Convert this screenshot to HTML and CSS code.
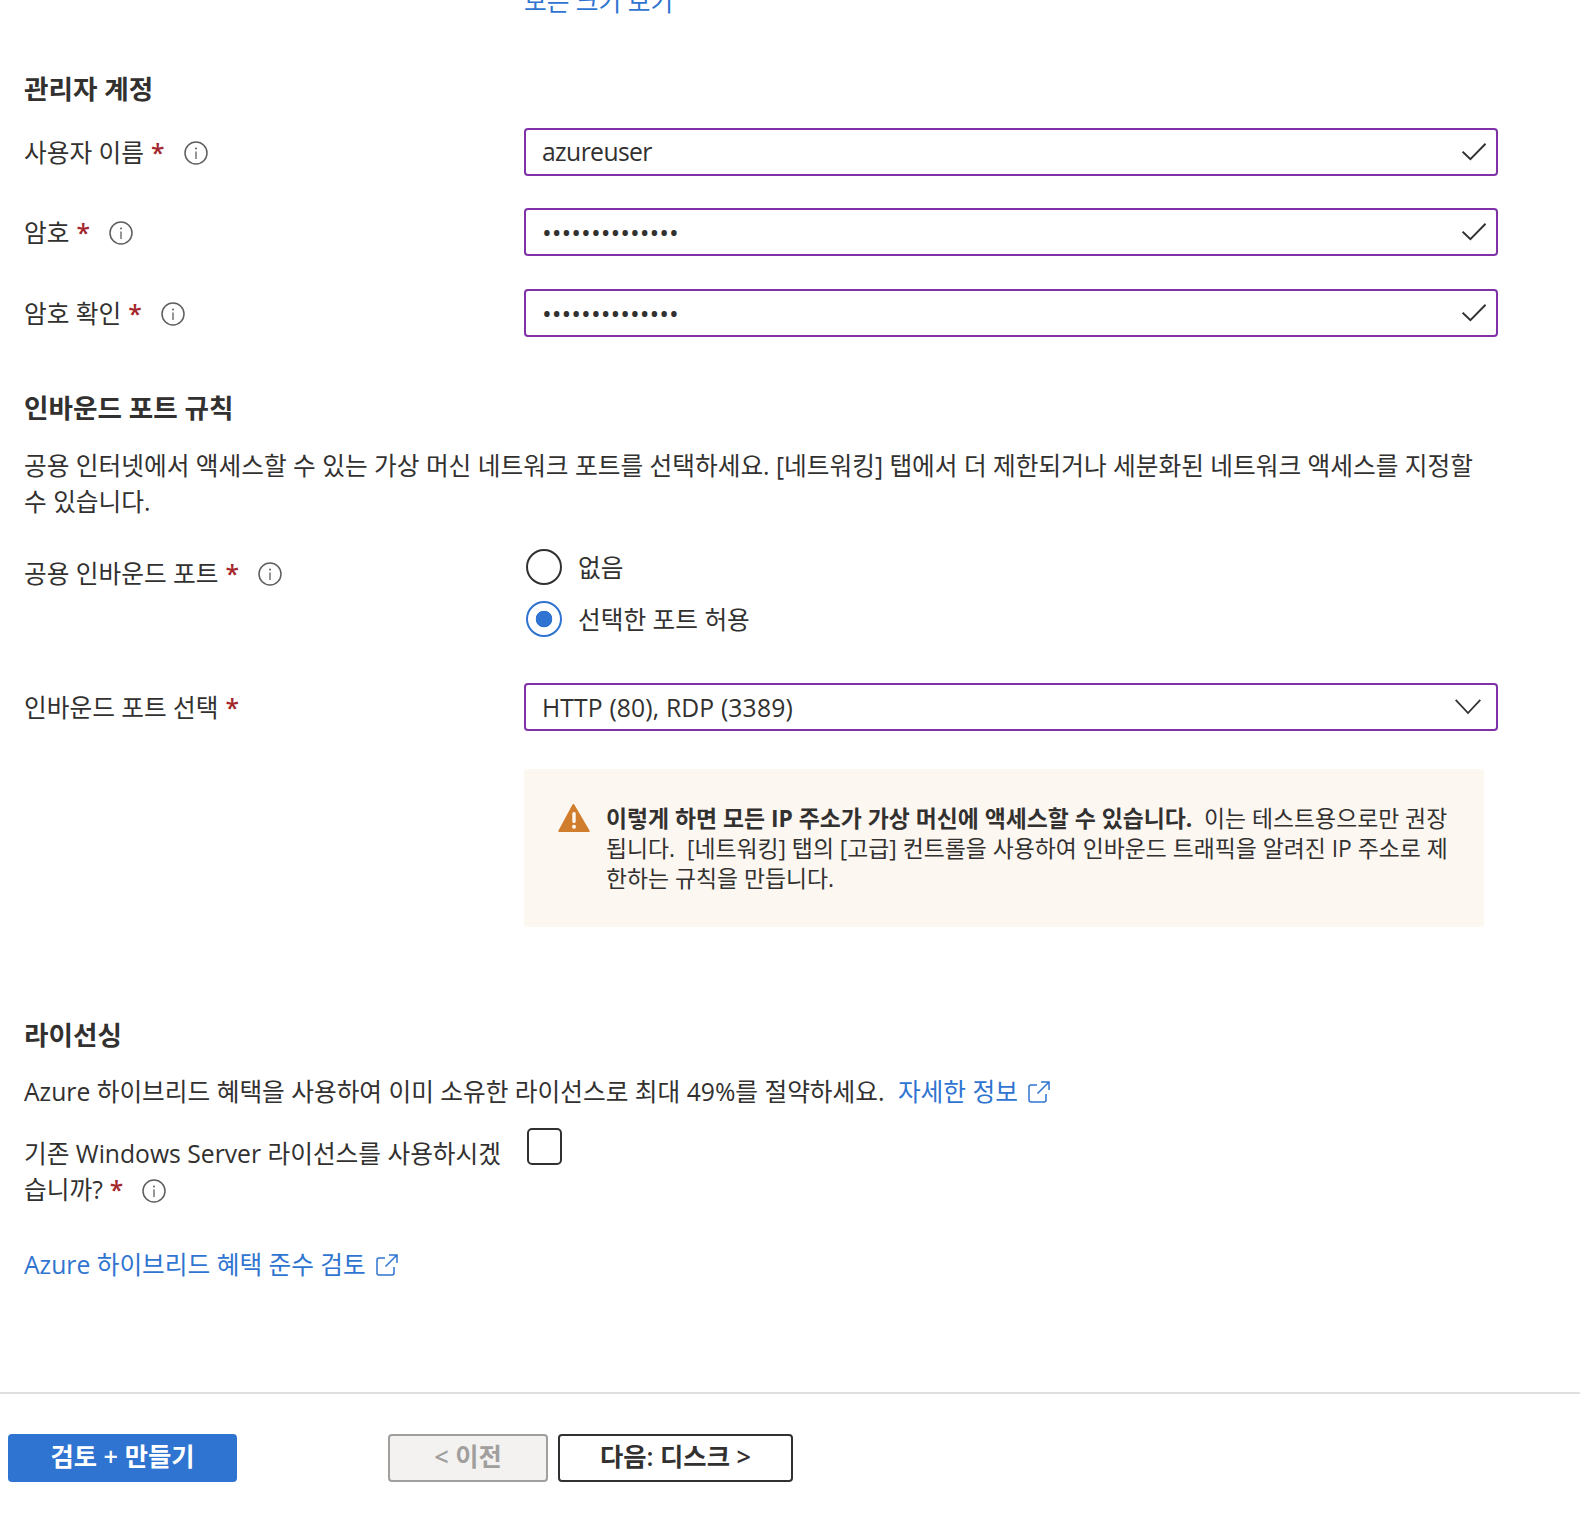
FILE: index.html
```html
<!DOCTYPE html>
<html lang="ko">
<head>
<meta charset="utf-8">
<title>가상 머신 만들기</title>
<link rel="stylesheet" href="styles.css">
</head>
<body>
<svg class="defs" width="0" height="0" aria-hidden="true">
  <symbol id="info" viewBox="0 0 24 24"><circle cx="12" cy="12" r="11" fill="none" stroke="#605e5c" stroke-width="1.5"/><path d="M12 10.5v7.5" stroke="#605e5c" stroke-width="1.3" fill="none"/><circle cx="12" cy="7.4" r="1" fill="#605e5c"/></symbol>
  <symbol id="check" viewBox="0 0 24 18"><path d="M.6 8.6 8.4 16.2 23.6.8" fill="none" stroke="#323130" stroke-width="2"/></symbol>
  <symbol id="ext" viewBox="0 0 22 22"><path d="M9 4H3a2 2 0 0 0-2 2v13a2 2 0 0 0 2 2h13a2 2 0 0 0 2-2v-6M9.500 12.500 20.500 1.500M13 1h8v8" fill="none" stroke="#2f74d0" stroke-width="1.500"/></symbol>
</svg>
<main class="page">
  <a class="top-link link" href="#">모든 크기 보기</a>

  <h2 class="heading heading-admin">관리자 계정</h2>
  <div class="row">
    <div class="label">사용자 이름<span class="req">*</span><svg class="info"><use href="#info"/></svg></div>
    <div class="field"><span class="value-narrow">azureuser</span><svg class="check"><use href="#check"/></svg></div>
  </div>
  <div class="row row-password">
    <div class="label">암호<span class="req">*</span><svg class="info"><use href="#info"/></svg></div>
    <div class="field"><span class="dots">••••••••••••••</span><svg class="check"><use href="#check"/></svg></div>
  </div>
  <div class="row">
    <div class="label">암호 확인<span class="req">*</span><svg class="info"><use href="#info"/></svg></div>
    <div class="field"><span class="dots">••••••••••••••</span><svg class="check"><use href="#check"/></svg></div>
  </div>

  <h2 class="heading heading-inbound">인바운드 포트 규칙</h2>
  <p class="para">공용 인터넷에서 액세스할 수 있는 가상 머신 네트워크 포트를 선택하세요. [네트워킹] 탭에서 더 제한되거나 세분화된 네트워크 액세스를 지정할 수 있습니다.</p>

  <div class="row row-radio">
    <div class="label">공용 인바운드 포트<span class="req">*</span><svg class="info"><use href="#info"/></svg></div>
    <div class="radios">
      <div class="radio-item"><span class="radio"></span><span class="radio-text">없음</span></div>
      <div class="radio-item"><span class="radio radio-on"></span><span class="radio-text">선택한 포트 허용</span></div>
    </div>
  </div>

  <div class="row row-select">
    <div class="label">인바운드 포트 선택<span class="req">*</span></div>
    <div class="field"><span class="value-wide">HTTP (80), RDP (3389)</span>
      <svg class="chevron" viewBox="0 0 26 16"><path d="M.7.8 13 14 25.300.8" fill="none" stroke="#323130" stroke-width="1.800"/></svg>
    </div>
  </div>

  <div class="callout">
    <svg class="warn" viewBox="0 0 32 29"><path d="M16 1 31.500 27.500a1 1 0 0 1-.8 1.500H1.300a1 1 0 0 1-.8-1.500L14.500 1.500a1.700 1.700 0 0 1 1.500-.5z" fill="#d17d2e"/><rect x="14.300" y="9" width="3.400" height="11" rx="1.500" fill="#fdf7f1"/><circle cx="16" cy="23.800" r="2" fill="#fdf7f1"/></svg>
    <p class="callout-text"><strong>이렇게 하면 모든 IP 주소가 가상 머신에 액세스할 수 있습니다.</strong>&nbsp; 이는 테스트용으로만 권장됩니다.&nbsp; [네트워킹] 탭의 [고급] 컨트롤을 사용하여 인바운드 트래픽을 알려진 IP 주소로 제한하는 규칙을 만듭니다.</p>
  </div>

  <h2 class="heading heading-license">라이선싱</h2>
  <p class="para">Azure 하이브리드 혜택을 사용하여 이미 소유한 라이선스로 최대 49%를 절약하세요. <a class="link link-inline" href="#">자세한 정보<svg class="ext"><use href="#ext"/></svg></a></p>

  <div class="row row-check">
    <div class="label label-wrap">기존 Windows Server 라이선스를 사용하시겠습니까?<span class="req">*</span><svg class="info"><use href="#info"/></svg></div>
    <div><span class="checkbox"></span></div>
  </div>

  <p class="para"><a class="link" href="#">Azure 하이브리드 혜택 준수 검토<svg class="ext"><use href="#ext"/></svg></a></p>
</main>
<footer class="footer">
  <button class="btn btn-primary">검토 + 만들기</button>
  <button class="btn btn-prev">&lt; 이전</button>
  <button class="btn btn-next">다음: 디스크 &gt;</button>
</footer>
</body>
</html>
```
FILE: styles.css
```css
* { box-sizing: border-box; }
html, body { margin: 0; padding: 0; }
body {
  width: 1580px;
  height: 1520px;
  overflow: hidden;
  background: #fff;
  color: #323130;
  font-family: "Open Sans", "Noto Sans CJK KR", sans-serif;
  font-size: 24.7px;
  line-height: 36px;
}
.defs { position: absolute; }
.page { height: 1392px; padding: 0 24px; overflow: hidden; }
.link { color: #2f74d0; text-decoration: none; }
.link-inline { margin-left: 7px; }
.top-link { display: block; margin: -16px 0 0 500px; height: 36px; }
.heading { margin: 0; font-size: 26.6px; line-height: 36px; font-weight: 700; }
.heading-admin { margin-top: 51px; margin-bottom: 21px; }
.heading-inbound { margin-top: 53px; margin-bottom: 22px; }
.heading-license { margin-top: 90px; margin-bottom: 21px; }
.row { display: grid; grid-template-columns: 500px 974px; margin-bottom: 32px; }
.row-password { margin-bottom: 33px; }
.label { display: flex; align-items: center; height: 48px; padding-top: 1px; }
.req { color: #a4262c; margin-left: 7px; font-weight: 600; }
.info { width: 24px; height: 24px; margin-left: 19px; flex: none; }
.field {
  display: flex;
  align-items: center;
  justify-content: space-between;
  height: 48px;
  padding: 0 10px 0 16px;
  border: 2px solid #8031a7;
  border-radius: 4px;
}
.value-narrow { letter-spacing: -0.6px; }
.value-wide { letter-spacing: 0.15px; padding-top: 1px; }
.dots { font-size: 26px; }
.check { width: 24px; height: 18px; }
.chevron { width: 26px; height: 16px; margin-right: 5px; }
.para { margin: 0; width: 1450px; }
.row-radio { margin-top: 29px; margin-bottom: 46px; }
.radios { display: flex; flex-direction: column; gap: 16px; padding-left: 2px; }
.radio-item { display: flex; align-items: center; height: 36px; }
.radio-text { padding-top: 1px; }
.radio {
  width: 36px;
  height: 36px;
  border: 2px solid #323130;
  border-radius: 50%;
  margin-right: 16px;
  flex: none;
}
.radio-on {
  border-color: #2f74d0;
  background: radial-gradient(circle, #2f74d0 0 8px, #fff 8.6px);
}
.row-select { margin-bottom: 38px; }
.callout {
  display: flex;
  width: 960px;
  height: 158px;
  margin-left: 500px;
  padding: 35px 32px 0 34px;
  background: #fdf7f1;
  border-radius: 4px;
  font-size: 22.85px;
  line-height: 30px;
}
.warn { width: 32px; height: 29px; flex: none; margin-right: 16px; margin-top: -1px; }
.callout-text { margin: 0; }
.ext { width: 22px; height: 22px; margin-left: 10px; vertical-align: -2px; }
.row-check { margin-top: 17px; margin-bottom: 39px; align-items: start; }
.label-wrap { display: block; height: auto; width: 480px; padding-top: 9px; }
.label-wrap .info { vertical-align: -4px; }
.checkbox { display: block; width: 35px; height: 37px; margin: 1px 0 0 3px; border: 2px solid #323130; border-radius: 5px; }
.footer {
  display: flex;
  align-items: flex-start;
  height: 128px;
  padding: 40px 0 0 8px;
  border-top: 2px solid #e1dfdd;
}
.btn {
  height: 48px;
  font: inherit;
  font-size: 25.3px;
  font-weight: 600;
  line-height: 1;
  border-radius: 4px;
  padding: 0 0 2px;
}
.btn-primary { width: 229px; background: #2f74d0; border: 0; color: #fff; margin-right: 151px; }
.btn-prev { width: 160px; background: #f3f2f1; border: 2px solid #a19f9d; color: #a19f9d; margin-right: 10px; }
.btn-next { width: 235px; background: #fff; border: 2px solid #323130; color: #323130; }
```
